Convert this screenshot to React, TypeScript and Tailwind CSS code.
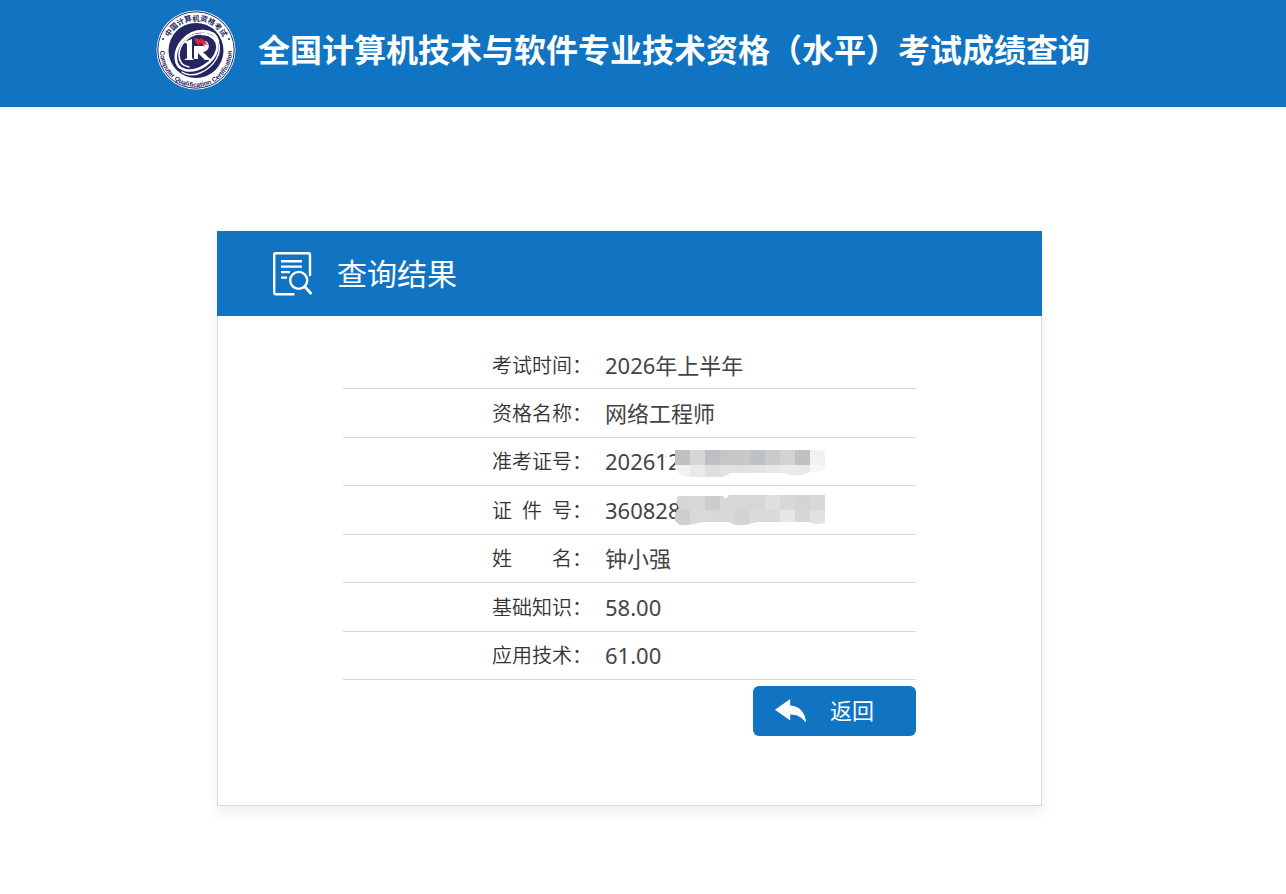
import React from "react";

type Row = { label: string; value: string; mask?: "ticket" | "identity" };

const rows: Row[] = [
  { label: "考试时间：", value: "2026年上半年" },
  { label: "资格名称：", value: "网络工程师" },
  { label: "准考证号：", value: "202612", mask: "ticket" },
  { label: "证\u2002件\u2002号：", value: "360828", mask: "identity" },
  { label: "姓\u2003\u2003名：", value: "钟小强" },
  { label: "基础知识：", value: "58.00" },
  { label: "应用技术：", value: "61.00" },
];

const masks = {
  ticket: {
    outline: "M0 0 H146 Q150 1 150 5 V18 Q149 21 144 22 H135 L128 25 H115 L108 23 H55 Q51 27 45 27 H14 Q9 27 5 24 L0 19Z",
    colors: [
      ["#bfc0c4", "#d6d6d6", "#bdbfc3", "#c6c6c8", "#cac8c6", "#bdc2c6", "#cacaca", "#d3d3d1", "#c1c1c1", "#f0f1f3"],
      ["#eff1f2", "#e9eaea", "#dfdfdf", "#e2e2e2", "#e1e1e1", "#e3e4e6", "#e7e8ea", "#e9eaec", "#e9e9e9", "#f7f7f8"],
    ],
    top: "top-[12px]",
  },
  identity: {
    outline: "M3 1 H48 L51 4 L54 0 H150 V28 L144 29 H140 L134 27 H83 L70 30 H60 L54 27 H28 L14 30 H5 L0 26 V18 L4 13 L1 7Z",
    colors: [
      ["#d5d6d8", "#d7d7d8", "#cbcccd", "#d5d7d9", "#d7d7d9", "#d7d7d7", "#dfdfdd", "#d8d9d7", "#d3d4d7", "#d8d8d9"],
      ["#cfcfcf", "#d9d9da", "#d8d8d8", "#d8d8d9", "#d3d3d4", "#d9dbdf", "#dadada", "#e6e6e6", "#d6d6d7", "#e1e1e1"],
    ],
    top: "top-[9px]",
  },
};

function Mosaic({ kind }: { kind: "ticket" | "identity" }) {
  const mask = masks[kind];
  return (
    <svg className={`absolute left-[83px] ${mask.top}`} width="150" height="30" viewBox="0 0 150 30" aria-hidden="true">
      <clipPath id={`outline-${kind}`}>
        <path d={mask.outline} />
      </clipPath>
      <g clipPath={`url(#outline-${kind})`} shapeRendering="crispEdges">
        {mask.colors.map((line, y) =>
          line.map((fill, x) => <rect key={`${x}-${y}`} x={x * 15} y={y * 15} width="15" height="15" fill={fill} />),
        )}
      </g>
    </svg>
  );
}

function Seal() {
  return (
    <svg className="size-20 shrink-0" viewBox="0 0 80 80" role="img" aria-label="中国计算机资格考试">
      <defs>
        <path id="seal-top" d="M10.5 40 A29.5 29.5 0 0 1 69.5 40" />
        <path id="seal-bottom" d="M4.5 35 A36 36 0 1 0 75.5 35" />
      </defs>
      <circle cx="40" cy="40" r="39.5" fill="#fff" />
      <circle cx="40" cy="40" r="38.2" fill="none" stroke="#26285f" strokeWidth="1" />
      <circle cx="40" cy="40.5" r="27.5" fill="#24265f" />
      <text fill="#24265f" fontSize="7.4" fontWeight="700" fontFamily="Noto Sans CJK SC, sans-serif">
        <textPath href="#seal-top" startOffset="50%" textAnchor="middle">中国计算机资格考试</textPath>
      </text>
      <text fill="#24265f" fontSize="6.6" fontWeight="700" fontFamily="Liberation Sans, sans-serif">
        <textPath href="#seal-bottom" startOffset="50%" textAnchor="middle">Computer Qualification Certification</textPath>
      </text>
      <circle cx="7" cy="29" r="1" fill="#24265f" />
      <circle cx="73" cy="29" r="1" fill="#24265f" />
      <g fill="none" stroke="#fff" strokeLinecap="round">
        <path d="M62 31 C58 18 38 18 27 30 C17 41 17 57 29 60 C42 63 58 52 61 40 C63 31 56 24 46 24" strokeWidth="2.6" />
        <path d="M46 24 C34 23 23 34 23 45 C23 52 27 56 33 57" strokeWidth="1.6" />
        <path d="M62 31 C67 43 58 57 44 63 C37 66 30 65 26 62" strokeWidth="1.4" />
      </g>
      <path d="M28 32 L36 29 V48 L38 50 H28 L31 48 V34Z" fill="#fff" />
      <path d="M38 36 H46 C49 36 49 33 47 32 L50 31 C55 35 53 41 47 42 L53 48 L57 50 H49 L42 43 V49 H38Z" fill="#fff" />
      <path d="M38 28 L43 29 L47 34 L43 33 L44 36 L40 33Z M44 28 L48 30 L52 35 L48 34 L49 37 L45 33Z" fill="#e32636" />
    </svg>
  );
}

function ResultIcon() {
  return (
    <svg className="h-11 w-10 shrink-0" viewBox="0 0 40 44" fill="none" stroke="#fff" aria-hidden="true">
      <path d="M37 23V3Q37 1.2 35.2 1.2H2.8Q1.2 1.2 1.2 2.8V40.5Q1.2 42.2 2.8 42.2H20.5" strokeWidth="2.4" strokeLinecap="round" />
      <path d="M8 9.3H29M8 14.6H29M8 20.1H17M8 25.6H14" strokeWidth="2.4" />
      <circle cx="25.7" cy="28.4" r="8.5" strokeWidth="2.4" />
      <path d="M31.8 34.8L38.4 42" strokeWidth="2.8" />
    </svg>
  );
}

export default function App() {
  return (
    <div className="min-h-screen bg-white font-['Noto_Sans','Noto_Sans_CJK_SC',sans-serif] text-[#444]">
      <header className="bg-[#1174c3] pt-[10px] pr-[27px] pb-[17px]">
        <div className="mx-auto flex max-w-[947px] items-center gap-[22px]">
          <Seal />
          <h1 className="pb-1 font-['Noto_Sans_CJK_SC',sans-serif] text-[32px] leading-[48px] font-bold whitespace-nowrap text-white">
            全国计算机技术与软件专业技术资格（水平）考试成绩查询
          </h1>
        </div>
      </header>

      <main className="pt-[124px] pr-[27px] pb-[88px]">
        <section className="mx-auto max-w-[825px] shadow-[0_8px_12px_rgba(0,0,0,0.06)]">
          <div className="flex h-[85px] items-center gap-6 bg-[#1174c3] pl-14">
            <ResultIcon />
            <h2 className="pb-1 font-['Noto_Sans_CJK_SC',sans-serif] text-[30px] leading-[44px] text-white">查询结果</h2>
          </div>
          <div className="border border-t-0 border-[#d9d9d9] px-[125px] pt-[25px] pb-[69px]">
            <table className="h-[339px] w-full table-fixed border-collapse">
              <tbody>
                {rows.map((row) => (
                  <tr key={row.label} className="border-b border-[#d9d9d9]">
                    <th
                      scope="row"
                      className="w-[249px] p-0 text-right font-['Noto_Sans_CJK_SC',sans-serif] text-[20px] leading-[30px] font-[350] whitespace-nowrap text-[#333]"
                    >
                      {row.label}
                    </th>
                    <td className="relative p-0 pl-[13px] text-left text-[22px] leading-[30px]">
                      {row.value}
                      {row.mask && <Mosaic kind={row.mask} />}
                    </td>
                  </tr>
                ))}
              </tbody>
            </table>
            <div className="mt-[6px] flex justify-end">
              <button
                type="button"
                className="flex h-[50px] w-[163px] items-center gap-6 rounded-md bg-[#1174c3] pl-[22px] font-['Noto_Sans_CJK_SC',sans-serif] text-[22px] leading-[32px] text-white"
              >
                <svg className="h-6 w-[31px]" viewBox="0 0 31 24" fill="#fff" aria-hidden="true">
                  <path d="M0 10.8L15.2 0V6.5C25 7 30.5 14 31 23.8C26.5 17.5 22 15.5 15.2 15.4V21.5Z" />
                </svg>
                <span className="pb-1">返回</span>
              </button>
            </div>
          </div>
        </section>
      </main>
    </div>
  );
}
